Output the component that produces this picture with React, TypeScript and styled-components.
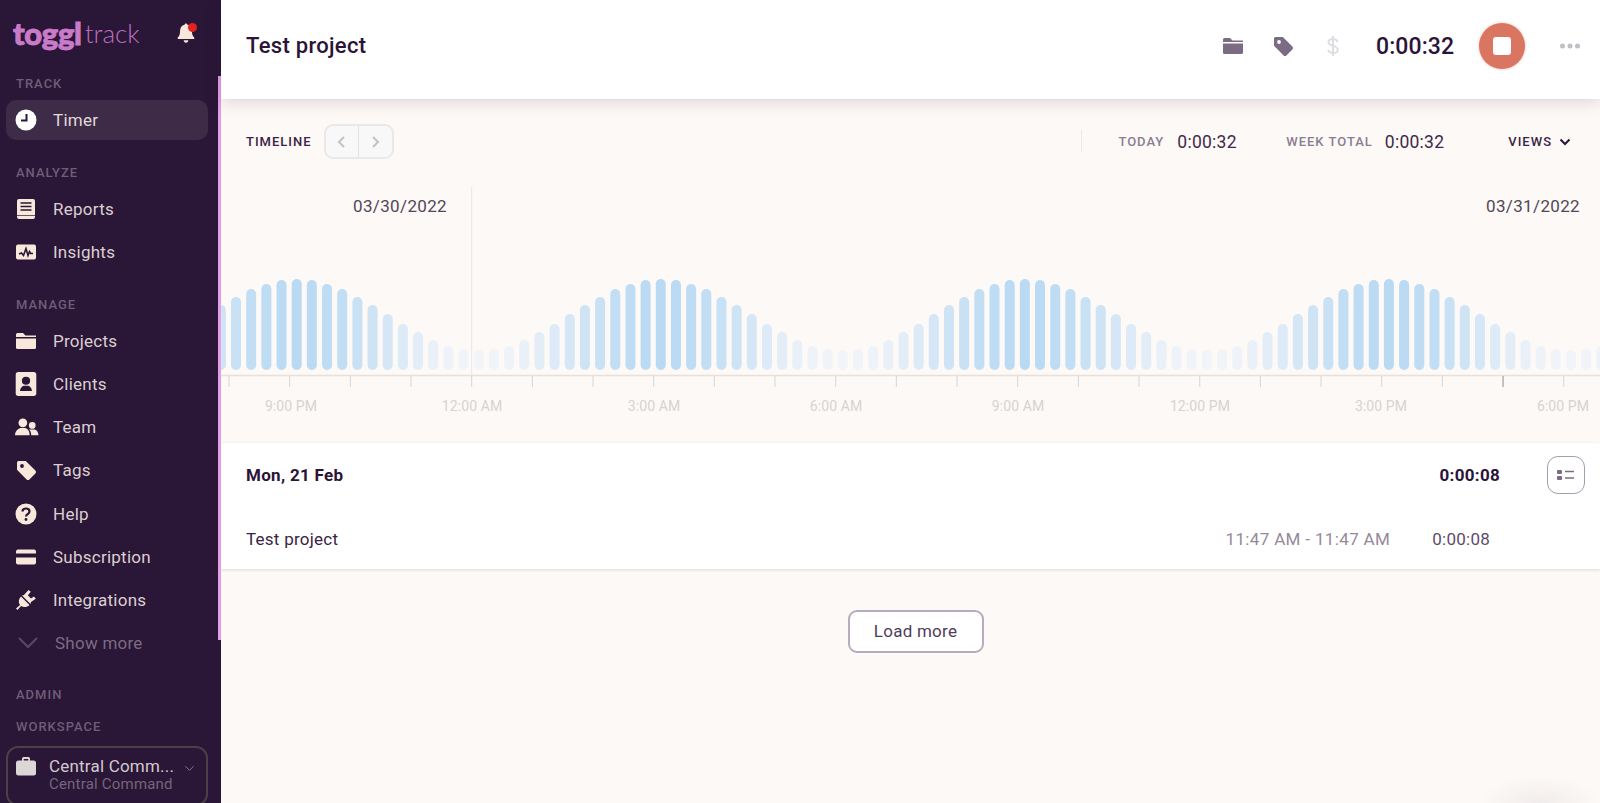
import React from 'react';
import styled, { createGlobalStyle } from 'styled-components';

const Global = createGlobalStyle`
  html, body { margin: 0; padding: 0; height: 100%; overflow: hidden; background: #fdf9f6; }
  body { font-family: Roboto, "Liberation Sans", sans-serif; color: #2c1338; }
  * { box-sizing: border-box; }
`;

const Page = styled.div`display:flex;width:1600px;height:803px;position:relative;overflow:hidden;background:#fdf9f6;`;
const Sidebar = styled.aside`width:221px;flex:none;height:803px;background:#2a1636;position:relative;overflow:hidden;`;
const ScrollThumb = styled.div`position:absolute;left:218px;top:76px;width:3px;height:564px;background:#e39ee6;`;
const Brand = styled.div`height:74px;display:flex;align-items:center;padding:0 0 8px 13px;position:relative;`;
const LogoBold = styled.span`font-family:Lato,sans-serif;font-weight:900;font-size:31px;letter-spacing:-.3px;color:#c97bc9;line-height:1;-webkit-text-stroke:.9px #c97bc9;`;
const LogoLight = styled.span`font-family:Lato,sans-serif;font-weight:300;font-size:26px;color:#bd70bf;line-height:1;margin-left:3px;`;
const BellWrap = styled.span`position:absolute;left:175px;top:22px;width:22px;height:24px;`;
const BellDot = styled.span`position:absolute;right:0;top:1px;width:9px;height:9px;border-radius:50%;background:#e3231e;`;
const SectionLabel = styled.div<{ $top: number }>`margin:${p => p.$top}px 0 0 16px;height:20px;line-height:20px;font-size:13px;font-weight:500;letter-spacing:1px;color:#6f5d79;`;
const NavList = styled.nav<{ $top: number }>`margin-top:${p => p.$top}px;display:flex;flex-direction:column;`;
const IconBox = styled.span`width:24px;height:24px;flex:none;display:flex;align-items:center;justify-content:center;`;
const NavRow = styled.div<{ $muted?: boolean }>`height:43.25px;display:flex;align-items:center;gap:15px;padding-left:${p => p.$muted ? 16 : 14}px;font-size:17px;letter-spacing:.25px;color:${p => p.$muted ? '#7c6b85' : '#dccfd2'};`;
const ActiveRow = styled.div`margin:6px 13px 0 6px;height:40px;display:flex;align-items:center;gap:15px;padding-left:8px;border-radius:10px;background:#3d2b48;font-size:17px;letter-spacing:.25px;color:#e2d9da;`;
const Workspace = styled.div`margin:9.5px 13px 0 6px;height:60px;border:2px solid #4b4048;border-radius:12px;display:flex;padding:6px 0 0 6px;gap:11px;position:relative;`;
const WsText = styled.div`display:flex;flex-direction:column;width:132px;margin-top:3px;`;
const WsName = styled.div`font-size:17px;line-height:19px;letter-spacing:.2px;color:#d5c9cf;white-space:nowrap;`;
const WsSub = styled.div`font-size:15px;line-height:17px;letter-spacing:.2px;color:#75657d;white-space:nowrap;`;
const WsChevron = styled.span`position:absolute;right:11px;top:11px;`;

const Main = styled.main`flex:1;min-width:0;display:flex;flex-direction:column;`;
const Header = styled.header`height:99px;background:#fff;display:flex;align-items:center;padding:0 18px 7px 25px;box-shadow:0 3px 16px rgba(44,19,56,.16);position:relative;z-index:1;`;
const Title = styled.h1`margin:0 0 1px;font-size:22px;font-weight:500;letter-spacing:.3px;flex:1;color:#2c1338;`;
const HeaderIcon = styled.span<{ $gap: number }>`display:flex;margin-right:${p => p.$gap}px;`;
const Clock = styled.div`font-size:23px;font-weight:500;letter-spacing:.1px;width:79px;margin:0 24px 0 31px;color:#2c1338;white-space:nowrap;`;
const StopBtn = styled.button`width:46px;height:46px;border-radius:50%;border:0;padding:0;background:#da7562;box-shadow:0 0 3px rgba(218,117,98,.5);display:flex;align-items:center;justify-content:center;margin-right:33px;`;
const StopSquare = styled.span`width:18px;height:18px;border-radius:3px;background:#fff;`;

const Toolbar = styled.div`height:88px;display:flex;align-items:flex-start;padding:25px 0 0 25px;`;
const Caps = styled.span<{ $dark?: boolean }>`font-size:13px;font-weight:500;letter-spacing:1px;color:${p => p.$dark ? '#3b2347' : '#8a7d92'};`;
const ToolCell = styled.div<{ $ml?: number }>`height:35px;display:flex;align-items:center;margin-left:${p => p.$ml ?? 0}px;`;
const NavGroup = styled.div`display:flex;width:70px;height:35px;margin-left:12px;border:2px solid #e9e8ea;border-radius:9px;background:#f9f8f8;`;
const NavHalf = styled.span<{ $edge?: boolean }>`flex:1;display:flex;align-items:center;justify-content:center;border-left:${p => p.$edge ? '1px solid #e4e2e5' : '0'};`;
const Divider = styled.span`width:1px;height:22px;margin-top:6px;background:#ece8e6;margin-left:auto;`;
const Stat = styled.span<{ $ml: number }>`font-size:17.5px;font-weight:400;letter-spacing:.25px;color:#3f2a4a;margin-left:${p => p.$ml}px;`;
const Chart = styled.svg`display:block;width:1379px;height:256px;flex:none;`;
const DayCard = styled.section`background:#fff;height:126px;box-shadow:0 1px 3px rgba(44,19,56,.14);display:flex;flex-direction:column;`;
const DayRow = styled.div`height:64px;display:flex;align-items:center;padding:0 15px 0 25px;`;
const DayTitle = styled.div`font-size:17px;font-weight:700;letter-spacing:.3px;flex:1;`;
const DayTotal = styled.div`font-size:17px;font-weight:700;letter-spacing:.3px;margin-right:47px;`;
const ListBtn = styled.button`width:38px;height:38px;border:1.5px solid #a79cad;border-radius:11px;background:#fff;padding:0;display:flex;align-items:center;justify-content:center;`;
const EntryRow = styled.div`flex:1;display:flex;align-items:center;padding:2px 110px 0 25px;font-size:17px;letter-spacing:.25px;`;
const EntryName = styled.div`flex:1;color:#3a2445;`;
const EntryTime = styled.div`color:#948a9a;letter-spacing:.35px;margin-right:42px;`;
const EntryDur = styled.div`color:#5d4c68;`;
const LoadWrap = styled.div`display:flex;justify-content:center;padding:41px 0 0 10px;`;
const LoadBtn = styled.button`width:136px;height:43px;background:#fff;border:2px solid #b7acbe;border-radius:9px;padding-bottom:2px;font:400 17px Roboto,sans-serif;letter-spacing:.25px;color:#4f3d5b;`;
const CornerGlow = styled.div`position:absolute;left:1480px;top:775px;width:120px;height:60px;border-radius:50%;background:radial-gradient(closest-side,rgba(90,80,110,.08),rgba(90,80,110,0));`;

const cream = '#f8e8dc';
const dark = '#2a1636';
type IP = { children: React.ReactNode; size?: number };
const Ico = ({ children, size = 24 }: IP) => <svg width={size} height={size} viewBox="0 0 24 24" style={{ flex: 'none' }}>{children}</svg>;

const ClockIcon = () => <Ico><circle cx="12" cy="12" r="10.5" fill="#fff" /><path d="M12.5 6v6.5H7" fill="none" stroke={dark} strokeWidth="2" /></Ico>;
const ReportsIcon = () => <Ico><rect x="3" y="2" width="18" height="20" rx="2" fill={cream} /><path d="M6.5 6h11M6.5 9.5h11M6.5 13h11" stroke={dark} strokeWidth="1.7" /><path d="M3 18.5h18" stroke={dark} strokeWidth=".7" /></Ico>;
const InsightsIcon = () => <Ico><rect x="2" y="4.5" width="20" height="15" rx="2" fill={cream} /><path d="M5 14l2.5-1 2 2.5 2.5-7 2 7 1.5-4 1.2 2H19" fill="none" stroke={dark} strokeWidth="1.6" /></Ico>;
const FolderIcon = ({ c = cream }: { c?: string }) => <Ico><path d="M2 7V5.5A1.5 1.5 0 0 1 3.500 4h5.500l2.500 2.500H22V8H2z" fill={c} /><path d="M2 9.500h20v9A1.500 1.500 0 0 1 20.500 20h-17A1.500 1.500 0 0 1 2 18.500z" fill={c} /></Ico>;
const ClientsIcon = () => <Ico size={26}><rect x="2.500" y="1" width="19" height="22" rx="2.500" fill={cream} /><circle cx="12" cy="9" r="3.800" fill={dark} /><path d="M6.500 18.500c0-3 2-4.500 3.500-5h4c1.500.5 3.500 2 3.500 5z" fill={dark} /></Ico>;
const TeamIcon = () => <Ico size={25}><circle cx="8.500" cy="7.500" r="4.200" fill={cream} /><path d="M1 19.500c0-4 2.500-6 5-7h5c2.500 1 4 3 4 7z" fill={cream} /><circle cx="17.500" cy="10" r="3.200" fill={cream} /><path d="M16.500 19.500c0-2.500-.5-4-2-5.500h5.500c2 .8 3.500 2.500 3.500 5.500z" fill={cream} /></Ico>;
const TagIcon = ({ c = cream, h = dark }: { c?: string; h?: string }) => <Ico><path d="M3 4.500A1.500 1.500 0 0 1 4.500 3h7.300l9.600 9.600a2 2 0 0 1 0 2.800l-6 6a2 2 0 0 1-2.800 0L3 11.800z" fill={c} /><circle cx="8" cy="8" r="1.900" fill={h} /></Ico>;
const HelpIcon = () => <Ico><circle cx="12" cy="12" r="10.500" fill={cream} /><path d="M8.500 9.500C8.500 7.500 10 6.500 12 6.500s3.500 1.200 3.500 3c0 2.600-3.500 2.600-3.500 5" fill="none" stroke={dark} strokeWidth="2.200" /><circle cx="12" cy="17.500" r="1.400" fill={dark} /></Ico>;
const CardIcon = () => <Ico><path d="M2 6.500A2 2 0 0 1 4 4.500h16a2 2 0 0 1 2 2V8.500H2z" fill={cream} /><path d="M2 12.500h20v5a2 2 0 0 1-2 2H4a2 2 0 0 1-2-2z" fill={cream} /></Ico>;
const PlugIcon = () => <Ico><path d="M7 8.500l8.500 8.500c-2.500 2.500-6 2.700-8.500 1L3.500 22 2 20.500 6 17c-1.900-2.500-1.500-6 1-8.500z" fill={cream} /><path d="M9.500 7.500L14.500 2l2.300 1.800L12.500 9zM14 12.500l6-4 1.800 2.200-6 4z" fill={cream} /><path d="M8 7.500l8.500 8.500 1-5-4.500-4.500z" fill={cream} /></Ico>;
const ChevronIcon = ({ c, w = 2, s = 24 }: { c: string; w?: number; s?: number }) => <Ico size={s}><path d="M3 7l9 9 9-9" fill="none" stroke={c} strokeWidth={w} /></Ico>;
const CaseIcon = () => <Ico><path d="M8 7V4.500A1.500 1.500 0 0 1 9.500 3h5A1.500 1.500 0 0 1 16 4.500V7h-1.800V5h-4.400v2z" fill="#dcd6d6" /><rect x="2" y="6.500" width="20" height="15" rx="2.500" fill="#dcd6d6" /></Ico>;
const BellIcon = () => <Ico size={22}><path d="M12 1.500c.9 0 1.500.7 1.500 1.500 3.500.8 5 3.500 5 7 0 4 1 5.500 2.500 7v1.500H3V17c1.500-1.500 2.500-3 2.500-7 0-3.500 1.500-6.200 5-7 0-.8.600-1.500 1.500-1.500z" fill={cream} /><path d="M9.500 20h5c0 1.500-1 2.500-2.500 2.500S9.500 21.500 9.500 20z" fill={cream} /></Ico>;
const DollarIcon = () => <Ico><path d="M16.500 8c-.5-2-2.300-3-4.500-3-2.500 0-4.500 1.300-4.500 3.300 0 4.700 9.300 2.500 9.300 7.400 0 2.100-2 3.300-4.800 3.300-2.500 0-4.300-1.100-4.800-3.200M12 2v20" fill="none" stroke="#e0dde2" strokeWidth="2" /></Ico>;
const SmallArrow = ({ d }: { d: string }) => <svg width="12" height="14" viewBox="0 0 12 14"><path d={d} fill="none" stroke="#c4c1c6" strokeWidth="2" /></svg>;

const barHeights = [91, 90, 86, 81, 73, 65, 56, 46, 38, 30, 24, 21, 20];
const bars = Array.from({ length: 92 }, (_, i) => {
  const k = i - 5;
  const off = Math.abs(((k % 24) + 24) % 24);
  const h = barHeights[off > 12 ? 24 - off : off];
  const t = (h - 20) / 71;
  const mix = (a: number, b: number) => Math.round(a + (b - a) * t);
  return { x: 296.7 + k * 15.17, h, fill: `rgb(${mix(241, 186)},${mix(244, 218)},${mix(249, 243)})` };
});
const ticks = Array.from({ length: 24 }, (_, i) => 229 + 60.67 * i);
const hours = [[291, '9:00 PM'], [472, '12:00 AM'], [654, '3:00 AM'], [836, '6:00 AM'], [1018, '9:00 AM'], [1200, '12:00 PM'], [1381, '3:00 PM'], [1563, '6:00 PM']] as const;

const Nav = ({ icon, label }: { icon: React.ReactNode; label: string }) => <NavRow><IconBox>{icon}</IconBox><span>{label}</span></NavRow>;

export default function App() {
  return (
    <Page>
      <Global />
      <Sidebar>
        <Brand>
          <LogoBold>toggl</LogoBold><LogoLight>track</LogoLight>
          <BellWrap><BellIcon /><BellDot /></BellWrap>
        </Brand>
        <SectionLabel $top={0}>TRACK</SectionLabel>
        <ActiveRow><ClockIcon /><span>Timer</span></ActiveRow>
        <SectionLabel $top={22.5}>ANALYZE</SectionLabel>
        <NavList $top={5}>
          <Nav icon={<ReportsIcon />} label="Reports" />
          <Nav icon={<InsightsIcon />} label="Insights" />
        </NavList>
        <SectionLabel $top={21}>MANAGE</SectionLabel>
        <NavList $top={4}>
          <Nav icon={<FolderIcon />} label="Projects" />
          <Nav icon={<ClientsIcon />} label="Clients" />
          <Nav icon={<TeamIcon />} label="Team" />
          <Nav icon={<TagIcon />} label="Tags" />
          <Nav icon={<HelpIcon />} label="Help" />
          <Nav icon={<CardIcon />} label="Subscription" />
          <Nav icon={<PlugIcon />} label="Integrations" />
          <NavRow $muted><ChevronIcon c="#5b4866" /><span>Show more</span></NavRow>
        </NavList>
        <SectionLabel $top={19.5}>ADMIN</SectionLabel>
        <SectionLabel $top={12}>WORKSPACE</SectionLabel>
        <Workspace>
          <CaseIcon />
          <WsText><WsName>Central Comm...</WsName><WsSub>Central Command</WsSub></WsText>
          <WsChevron><ChevronIcon c="#8d7f94" s={11} /></WsChevron>
        </Workspace>
        <ScrollThumb />
      </Sidebar>
      <Main>
        <Header>
          <Title>Test project</Title>
          <HeaderIcon $gap={26}><FolderIcon c="#7b6c84" /></HeaderIcon>
          <HeaderIcon $gap={26}><TagIcon c="#7b6c84" h="#fff" /></HeaderIcon>
          <HeaderIcon $gap={0}><DollarIcon /></HeaderIcon>
          <Clock>0:00:32</Clock>
          <StopBtn><StopSquare /></StopBtn>
          <svg width="24" height="24" viewBox="0 0 24 24"><circle cx="4.500" cy="12" r="2.500" fill="#c2bec5" /><circle cx="12" cy="12" r="2.500" fill="#c2bec5" /><circle cx="19.500" cy="12" r="2.500" fill="#c2bec5" /></svg>
        </Header>
        <Toolbar>
          <ToolCell><Caps $dark>TIMELINE</Caps></ToolCell>
          <NavGroup>
            <NavHalf><SmallArrow d="M8 2L3 7l5 5" /></NavHalf>
            <NavHalf $edge><SmallArrow d="M4 2l5 5-5 5" /></NavHalf>
          </NavGroup>
          <Divider />
          <ToolCell $ml={36}><Caps>TODAY</Caps><Stat $ml={13}>0:00:32</Stat></ToolCell>
          <ToolCell $ml={49.5}><Caps>WEEK TOTAL</Caps><Stat $ml={12}>0:00:32</Stat></ToolCell>
          <ToolCell $ml={64}><Caps $dark>VIEWS</Caps><svg width="12" height="10" viewBox="0 0 12 10" style={{ marginLeft: 7 }}><path d="M1.500 2.500L6 7l4.500-4.500" fill="none" stroke="#2c1338" strokeWidth="2" /></svg></ToolCell>
          <ToolCell $ml={29} />
        </Toolbar>
        <Chart viewBox="221 187 1379 256">
          <line x1="471.700" y1="187" x2="471.700" y2="375" stroke="#ebe7e5" />
          <text x="447" y="212" textAnchor="end" fontFamily="Roboto" fontSize="17" letterSpacing=".35" fill="#524658">03/30/2022</text>
          <text x="1580" y="212" textAnchor="end" fontFamily="Roboto" fontSize="17" letterSpacing=".35" fill="#524658">03/31/2022</text>
          {bars.map(b => <rect key={b.x} x={b.x - 5} y={370 - b.h} width="10" height={b.h} rx="5" fill={b.fill} />)}
          <line x1="221" y1="375.500" x2="1600" y2="375.500" stroke="#e9e0d9" strokeWidth="1.500" />
          {ticks.map((x, i) => <line key={x} x1={x} y1="376" x2={x} y2="387" stroke={i === 21 ? '#b5b1b1' : '#d9d5d2'} strokeWidth={i === 21 ? 1.500 : 1} />)}
          {hours.map(([x, t]) => <text key={t} x={x} y="410.500" textAnchor="middle" fontFamily="Roboto" fontSize="14" letterSpacing=".1" fill="#d6d3d2">{t}</text>)}
        </Chart>
        <DayCard>
          <DayRow>
            <DayTitle>Mon, 21 Feb</DayTitle>
            <DayTotal>0:00:08</DayTotal>
            <ListBtn><svg width="20" height="14" viewBox="0 0 20 14"><rect x="1" y="2" width="5" height="4" rx="1" fill="#7b6c84" /><rect x="1" y="8" width="5" height="4" rx="1" fill="#7b6c84" /><path d="M9 3.500h9M9 10h9" stroke="#7b6c84" strokeWidth="1.500" /></svg></ListBtn>
          </DayRow>
          <EntryRow>
            <EntryName>Test project</EntryName>
            <EntryTime>11:47 AM - 11:47 AM</EntryTime>
            <EntryDur>0:00:08</EntryDur>
          </EntryRow>
        </DayCard>
        <LoadWrap><LoadBtn>Load more</LoadBtn></LoadWrap>
      </Main>
      <CornerGlow />
    </Page>
  );
}
